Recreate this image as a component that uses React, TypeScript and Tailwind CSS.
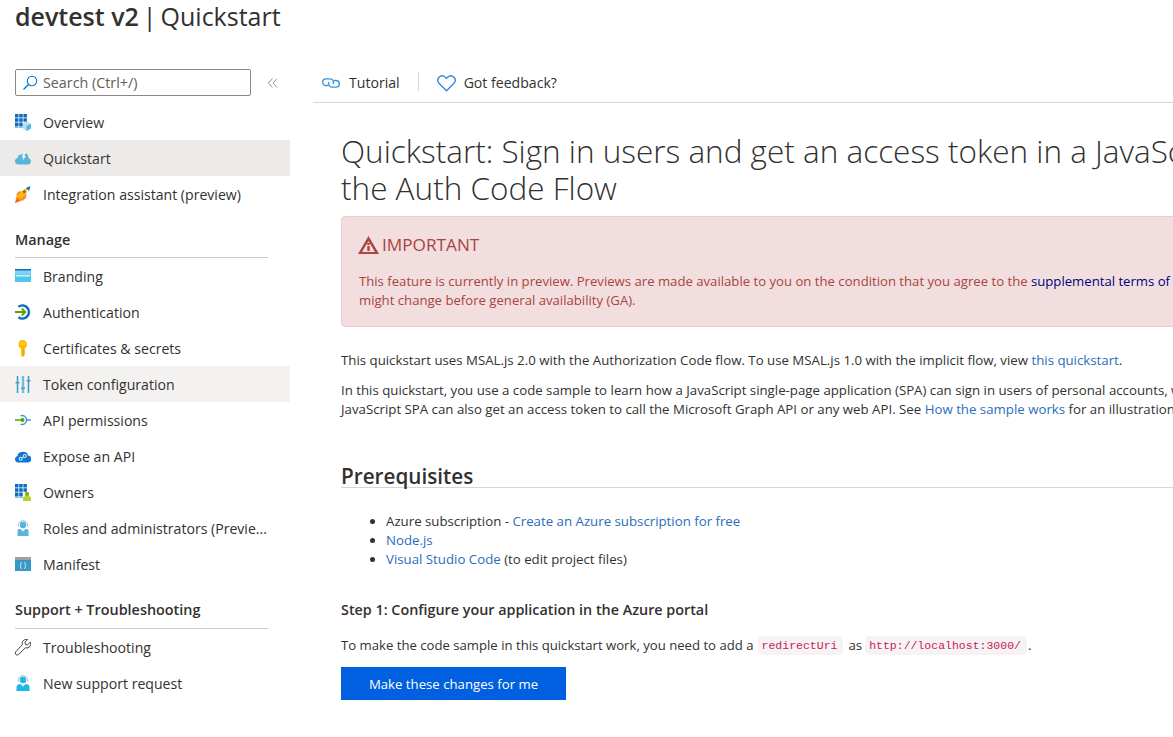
const font = { fontFamily: '"Open Sans", "Noto Sans", sans-serif' };

function OverviewIcon({ person }: { person?: boolean }) {
  return (
    <svg width="16" height="17" viewBox="0 0 16 17">
      <path fill="#0f6cbd" d="M0 0h3.500v3.500H0zM4.200 0h3.500v3.500H4.200zM8.400 0h3.500v3.500H8.400zM0 4.200h3.500v3.500H0zM4.200 4.200h3.500v3.500H4.200zM8.400 4.200h3.500v3.500H8.400zM0 8.400h3.500v3.500H0zM4.200 8.400h3.500v3.500H4.200zM4.200 12.600h3.500v1H4.200zM0 12.600h3.500v1H0z" />
      {person ? (
        <>
          <circle cx="12" cy="10" r="2.200" fill="#7fba00" />
          <path fill="#b8d432" d="M8 17v-3c0-1.500 2-2 4-2s4 .5 4 2v3z" />
        </>
      ) : (
        <>
          <path fill="#b3e0f5" d="M11.500 7.500l4.500 2.200v4.800L11.500 17 8 14.500V9.700z" />
          <path fill="#59b4d9" d="M11.500 12l4.500-2.300v4.800L11.500 17z" />
        </>
      )}
    </svg>
  );
}

function CloudIcon() {
  return (
    <svg width="16" height="16" viewBox="0 0 16 16">
      <path fill="#59b4d9" d="M3.300 14.500a3.300 3.300 0 0 1-.8-6.500A4 4 0 0 1 6.200 4.500l.8.1.800-1.600L7.700 6.500h1.500L8.800 3.300A3.800 3.800 0 0 1 13.300 8a3.300 3.300 0 0 1-.6 6.500z" />
      <path fill="#ffffff" d="M9.500 2.500L6.700 7.500h1.800L7.200 11l3.800-5H9.200l1.300-3.500z" />
    </svg>
  );
}

function RocketIcon() {
  return (
    <svg width="16" height="17" viewBox="0 0 16 17">
      <path fill="#f7941d" d="M0 17l1.300-6.200L5 8.500l3 3-1.800 3.500z" />
      <path fill="#e8601f" d="M0 17l2.500-4.500L4.500 14.500z" />
      <path fill="#fcb714" d="M2.500 10.500L9 3.500l3-1.500-.5 5-6.500 6z" />
      <path fill="#f7941d" d="M6 12l5.500-5-.5 5-3.500 3zM2.500 10L8 5 3.500 5.500 1 9z" />
      <path fill="#0f6cbd" d="M11 2l4.500-2L14 5z" />
      <circle cx="9.200" cy="5.800" r="1.300" fill="#7a5c00" />
    </svg>
  );
}

function BrandingIcon() {
  return (
    <svg width="16" height="16" viewBox="0 0 16 16">
      <rect y="1" width="16" height="13" fill="#50c8ee" />
      <rect y="1" width="16" height="1.500" fill="#0f6cbd" />
      <rect x="0" y="2.500" width="16" height="4" fill="#ffffff" opacity="0.25" />
      <rect x="1" y="7" width="14" height="1.500" fill="#ffffff" opacity="0.7" />
    </svg>
  );
}

function AuthIcon() {
  return (
    <svg width="16" height="16" viewBox="0 0 16 16">
      <path fill="none" stroke="#0f6cbd" strokeWidth="2.600" d="M3.500 2.800a6.500 6.500 0 1 1 0 10.400" />
      <path fill="none" stroke="#57a300" strokeWidth="1.800" d="M0 8h10M6.800 4.500L10.300 8l-3.500 3.500" />
    </svg>
  );
}

function KeyIcon() {
  return (
    <svg width="16" height="17" viewBox="0 0 16 17">
      <path fill="#ffb900" d="M7 0a4.500 4.500 0 0 1 2 8.500V15l-2 2-1.500-1.500V8.500A4.500 4.500 0 0 1 7 0z" transform="translate(.5 0)" />
      <path fill="#fcd116" d="M5 2.500h5V5H5z" />
      <path fill="#f2a100" d="M8 8.500h1.500V15L8 16.500z" />
    </svg>
  );
}

function SlidersIcon() {
  return (
    <svg width="16" height="17" viewBox="0 0 16 17">
      <path fill="#b3e0f5" d="M1 0h3v17H1zM6.500 0h3v17h-3zM12 0h3v17h-3z" />
      <path fill="#3999c6" d="M2 0h1v17H2zM7.500 0h1v17h-1zM13 0h1v17h-1z" />
      <path fill="#8a8a8a" d="M.5 6h4v1.500h-4zM6 11.500h4V13H6zM11.500 4h4v1.500h-4z" />
    </svg>
  );
}

function PermissionIcon() {
  return (
    <svg width="16" height="16" viewBox="0 0 16 16">
      <path fill="none" stroke="#3a96d8" strokeWidth="1.400" d="M5.500 3.800a4.500 4.500 0 1 1 0 8.400M12 8h4" />
      <path fill="none" stroke="#57a300" strokeWidth="1.500" d="M0 8h8" />
      <circle cx="7.500" cy="8" r="2" fill="#57a300" />
    </svg>
  );
}

function ExposeIcon() {
  return (
    <svg width="16" height="16" viewBox="0 0 16 16">
      <path fill="#0f78d4" d="M3.300 14.500a3.300 3.300 0 0 1-.8-6.500A4.200 4.200 0 0 1 7 4 4.500 4.500 0 0 1 13 7.600a3.400 3.400 0 0 1-.4 6.900z" />
      <circle cx="5.700" cy="10.800" r="1.500" fill="none" stroke="#cfe7f7" strokeWidth="1.100" />
      <circle cx="9.800" cy="8" r="1.500" fill="none" stroke="#cfe7f7" strokeWidth="1.100" />
      <path stroke="#cfe7f7" strokeWidth="1" d="M6.800 9.900l1.900-1.200" />
    </svg>
  );
}

function PersonIcon({ light }: { light?: boolean }) {
  const c = light ? "#59b4d9" : "#1fb6e8";
  return (
    <svg width="16" height="17" viewBox="0 0 16 17">
      <circle cx="8" cy="5" r="3.200" fill={c} />
      <path fill="none" stroke="#9fb4bf" strokeWidth="1" d="M3.300 6.500a4.800 4.800 0 1 1 9.400 0" />
      <path fill={c} d={light ? "M2.500 16v-5.500c0-1 1-1.500 3-1.500L8 11.500 10.500 9c2 0 3 .5 3 1.500V16z" : "M1.500 16v-4c0-2 2-3 4-3L8 11.500 10.500 9c2 0 4 1 4 3v4z"} />
    </svg>
  );
}

function ManifestIcon() {
  return (
    <svg width="16" height="16" viewBox="0 0 16 16">
      <rect y="1" width="16" height="14" fill="#3999c6" />
      <rect y="1" width="16" height="3" fill="#a0a0a0" />
      <path fill="none" stroke="#ffffff" strokeWidth="0.800" d="M6.500 6.500c-1 0-.7 1-.7 2s-.5 1-.5 1 .5 0 .5 1-.3 2 .7 2M9.500 6.500c1 0 .7 1 .7 2s.5 1 .5 1-.5 0-.5 1 .3 2-.7 2" />
    </svg>
  );
}

function WrenchIcon() {
  return (
    <svg width="16" height="17" viewBox="0 0 16 17">
      <path fill="none" stroke="#404040" strokeWidth="1" d="M15.300 3.200l-2.800 2.600-2.100-.5-.5-2.100L12.600.6a4 4 0 0 0-5.200 5L.9 12.600a2 2 0 0 0 0 2.800c.8.800 2 .8 2.800 0l6.700-6.600a4 4 0 0 0 4.900-5.600z" />
    </svg>
  );
}

function NavItem({ icon, label, bg }: { icon: React.ReactNode; label: string; bg?: string }) {
  return (
    <div className={`flex h-9 items-center pl-[15px] text-[14.1px] text-[#323130] ${bg ?? ""}`}>
      <span className="flex w-[28px] shrink-0 items-center">{icon}</span>
      <span className="whitespace-nowrap pt-[2px] leading-[20px]">{label}</span>
    </div>
  );
}

function SectionHead({ label, mt, pb }: { label: string; mt: string; pb: string }) {
  return (
    <div className={`ml-[15px] mr-[22px] border-b border-[#cccccc] text-[14.4px] font-semibold leading-[19px] text-[#323130] ${mt} ${pb}`}>
      {label}
    </div>
  );
}

export default function App() {
  return (
    <div style={font} className="h-[737px] w-[1173px] overflow-hidden bg-white text-[#323130]">
      <h1 className="h-[69px] pl-[15px] text-[25px] leading-[33px] whitespace-nowrap [word-spacing:-2.5px]">
        <span className="font-semibold [word-spacing:0px]">devtest v2</span> | Quickstart
      </h1>
      <div className="flex">
        <aside className="w-[290px] shrink-0">
          <div className="flex h-[35px] items-start pl-[15px]">
            <div className="flex h-[27px] w-[236px] items-center rounded-[2px] border border-[#8a8886] pl-[6px] text-[14.3px] text-[#605e5c]">
              <svg width="16" height="16" viewBox="0 0 16 16" className="mr-[5px]">
                <circle cx="10" cy="6" r="4.700" fill="none" stroke="#0078d4" strokeWidth="1.100" />
                <path stroke="#0078d4" strokeWidth="1.300" d="M6.700 9.300L1.500 14.500" />
              </svg>
              Search (Ctrl+/)
            </div>
            <svg width="10" height="10" viewBox="0 0 10 10" className="ml-[17px] mt-[9px]">
              <path fill="none" stroke="#8a8886" strokeWidth="0.900" d="M4.500.5L.5 5l4 4.500M9 .5L5 5l4 4.500" />
            </svg>
          </div>
          <NavItem icon={<OverviewIcon />} label="Overview" />
          <NavItem icon={<CloudIcon />} label="Quickstart" bg="bg-[#edebe9]" />
          <NavItem icon={<RocketIcon />} label="Integration assistant (preview)" />
          <SectionHead label="Manage" mt="mt-[18px]" pb="pb-[8px]" />
          <NavItem icon={<BrandingIcon />} label="Branding" />
          <NavItem icon={<AuthIcon />} label="Authentication" />
          <NavItem icon={<KeyIcon />} label="Certificates & secrets" />
          <NavItem icon={<SlidersIcon />} label="Token configuration" bg="bg-[#f3f2f1]" />
          <NavItem icon={<PermissionIcon />} label="API permissions" />
          <NavItem icon={<ExposeIcon />} label="Expose an API" />
          <NavItem icon={<OverviewIcon person />} label="Owners" />
          <NavItem icon={<PersonIcon light />} label="Roles and administrators (Previe..." />
          <NavItem icon={<ManifestIcon />} label="Manifest" />
          <SectionHead label="Support + Troubleshooting" mt="mt-[18px]" pb="pb-[9px]" />
          <NavItem icon={<WrenchIcon />} label="Troubleshooting" />
          <NavItem icon={<PersonIcon />} label="New support request" />
        </aside>
        <main className="ml-[23px] min-w-0 flex-1">
          <div className="flex h-[34px] items-start border-b border-[#d6d6d6] pl-[9px] text-[14.1px] leading-[28px]">
            <span className="flex h-[28px] items-center">
              <svg width="18" height="14" viewBox="0 0 18 14" className="mr-[9px]">
                <path fill="none" stroke="#3a96dd" strokeWidth="1.400" d="M6 9.500H4a3.300 3.300 0 0 1 0-6.600h4.500A3.300 3.300 0 0 1 11 8M12 4.500h2a3.300 3.300 0 0 1 0 6.600H9.500A3.300 3.300 0 0 1 7 6" />
              </svg>
              Tutorial
            </span>
            <span className="mx-[18px] mt-[3px] h-[19px] w-px bg-[#d6d6d6]" />
            <span className="flex h-[28px] items-center">
              <svg width="19" height="17" viewBox="0 0 19 17" className="mr-[8px]">
                <path fill="none" stroke="#2b88d8" strokeWidth="1.300" d="M9.500 15.800L2 8.200a4.500 4.500 0 0 1 0-6 4.700 4.700 0 0 1 6.300 0l1.200 1.200 1.200-1.200a4.700 4.700 0 0 1 6.300 0 4.500 4.500 0 0 1 0 6z" />
              </svg>
              Got feedback?
            </span>
          </div>
          <div className="pl-[28px] text-[13.25px] leading-[19px]">
            <h2 className="mt-[29px] whitespace-nowrap text-[31.5px] font-light leading-[37px] text-[#323130]">
              Quickstart: Sign in users and get an access token in a JavaScript SPA using
              <br />
              the Auth Code Flow
            </h2>
            <div className="mt-[10px] h-[111px] w-[1000px] rounded-[4px] border border-[#ebccd1] bg-[#f2dede] pl-[17px] text-[#a94442]">
              <div className="-ml-px mt-[16px] flex items-center text-[17.2px] leading-[24px] font-medium">
                <svg width="21" height="18" viewBox="0 0 21 18" className="mr-[3px]">
                  <path fill="#a94442" fillRule="evenodd" d="M10.500 0L21 18H0zM10.500 5L4 16h13z" />
                  <path fill="#a94442" d="M9.300 10h2.400v5H9.300zM9.300 6.800h2.400v2.200H9.300z" />
                </svg>
                IMPORTANT
              </div>
              <p className="mt-[15px] whitespace-nowrap text-[13.15px]">
                This feature is currently in preview. Previews are made available to you on the condition that you agree to the{" "}
                <span className="text-[#000080]">supplemental terms of use</span>
                <br />
                might change before general availability (GA).
              </p>
            </div>
            <p className="mt-[24px] whitespace-nowrap">
              This quickstart uses MSAL.js 2.0 with the Authorization Code flow. To use MSAL.js 1.0 with the implicit flow, view{" "}
              <span className="text-[#2a6ebb]">this quickstart</span>.
            </p>
            <p className="mt-[11px] whitespace-nowrap">
              In this quickstart, you use a code sample to learn how a JavaScript single-page application (SPA) can sign in users of personal accounts, work and school
              <br />
              JavaScript SPA can also get an access token to call the Microsoft Graph API or any web API. See{" "}
              <span className="text-[#2a6ebb]">How the sample works</span> for an illustration.
            </p>
            <h3 className="mt-[46px] border-b border-[#d6d6d6] text-[20.7px] leading-[22px] font-semibold">Prerequisites</h3>
            <ul className="mt-[24px] list-disc pl-[45px]">
              <li>
                Azure subscription - <span className="text-[#2a6ebb]">Create an Azure subscription for free</span>
              </li>
              <li>
                <span className="text-[#2a6ebb]">Node.js</span>
              </li>
              <li>
                <span className="text-[#2a6ebb]">Visual Studio Code</span> (to edit project files)
              </li>
            </ul>
            <h4 className="mt-[31px] text-[14.35px] leading-[20px] font-semibold">Step 1: Configure your application in the Azure portal</h4>
            <p className="mt-[16px] flex items-center whitespace-nowrap">
              <span className="text-[13.15px]">To make the code sample in this quickstart work, you need to add a</span>
              <code className="ml-[4px] mr-[5px] rounded-[5px] bg-[#f6f2f5] pl-[4px] pr-[6px] font-['Liberation_Mono',monospace] text-[11.5px] leading-[19px] text-[#c7254e]">redirectUri</code>
              <span>as</span>
              <code className="ml-[3px] rounded-[5px] bg-[#f6f2f5] pl-[4px] pr-[6px] font-['Liberation_Mono',monospace] text-[11.5px] leading-[19px] text-[#c7254e]">http://localhost:3000/</code>
              <span className="ml-px">.</span>
            </p>
            <button className="mt-[12px] block h-[33px] w-[225px] bg-[#0060df] pt-[2px] text-[13.2px] text-white">Make these changes for me</button>
          </div>
        </main>
      </div>
    </div>
  );
}
